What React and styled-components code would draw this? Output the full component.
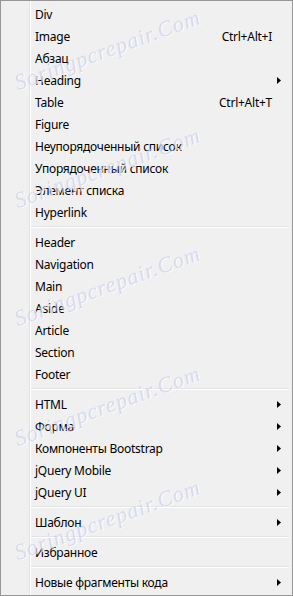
import React from 'react';
import styled, { createGlobalStyle } from 'styled-components';

const GlobalStyle = createGlobalStyle`
    html, body {
        margin: 0;
        padding: 0;
        background: #ffffff;
    }
`;

const sections = [
    [
        { label: 'Div' },
        { label: 'Image', shortcut: 'Ctrl+Alt+I' },
        { label: 'Абзац' },
        { label: 'Heading', sub: true },
        { label: 'Table', shortcut: 'Ctrl+Alt+T' },
        { label: 'Figure' },
        { label: 'Неупорядоченный список' },
        { label: 'Упорядоченный список' },
        { label: 'Элемент списка' },
        { label: 'Hyperlink' },
    ],
    [
        { label: 'Header' },
        { label: 'Navigation' },
        { label: 'Main' },
        { label: 'Aside' },
        { label: 'Article' },
        { label: 'Section' },
        { label: 'Footer' },
    ],
    [
        { label: 'HTML', sub: true },
        { label: 'Форма', sub: true },
        { label: 'Компоненты Bootstrap', sub: true },
        { label: 'jQuery Mobile', sub: true },
        { label: 'jQuery UI', sub: true },
    ],
    [{ label: 'Шаблон', sub: true }],
    [{ label: 'Избранное' }],
    [{ label: 'Новые фрагменты кода', sub: true }],
];

// watermark spots, top-left of each stamp
const stamps = [
    { left: 18, top: 71 },
    { left: 18, top: 189 },
    { left: 18, top: 307 },
    { left: 18, top: 427 },
    { left: 18, top: 541 },
];

function Arrow() {
    return (
        <svg width="4" height="7" viewBox="0 0 4 7">
            <path d="M0 0 L4 3.5 L0 7 Z" fill="#000" />
        </svg>
    );
}

function App() {
    return (
        <>
            <GlobalStyle />
            <Menu>
                {sections.map((items, i) => (
                    <React.Fragment key={i}>
                        {i > 0 && <Separator />}
                        {items.map((item) => (
                            <Row key={item.label}>
                                <Label>{item.label}</Label>
                                {item.shortcut && <Shortcut>{item.shortcut}</Shortcut>}
                                <Trail>{item.sub && <Arrow />}</Trail>
                            </Row>
                        ))}
                    </React.Fragment>
                ))}
                {stamps.map((s, i) => (
                    <Watermark key={i} style={{ left: s.left, top: s.top }}>
                        Soringpcrepair.Com
                    </Watermark>
                ))}
            </Menu>
        </>
    );
}

const Menu = styled.div`
    position: relative;
    box-sizing: border-box;
    width: 293px;
    height: 596px;
    padding: 2px;
    overflow: hidden;
    border: 1px solid #979797;
    background-color: #f0f0f0;
    background-image: linear-gradient(
        to right,
        transparent 28px,
        #e2e3e3 28px,
        #e2e3e3 29px,
        #ffffff 29px,
        #ffffff 30px,
        transparent 30px
    );
    font-family: "Noto Sans", "Open Sans", sans-serif;
    font-size: 12px;
    letter-spacing: -0.25px;
    color: #000;
`;

const Row = styled.div`
    display: flex;
    align-items: center;
    height: 22px;
    padding: 0 9px 0 32px;
    white-space: nowrap;
`;

const Label = styled.span`
    flex: 1;
`;

const Shortcut = styled.span`
    margin-right: 5px;
`;

const Trail = styled.span`
    display: flex;
    align-items: center;
    width: 4px;
    height: 7px;
`;

const Separator = styled.div`
    display: flex;
    align-items: center;
    height: 8px;
    margin: 0 1px 0 28px;

    &::before {
        content: '';
        flex: 1;
        border-top: 1px solid #e2e3e3;
        border-bottom: 1px solid #ffffff;
    }
`;

const Watermark = styled.div`
    position: absolute;
    pointer-events: none;
    transform: rotate(-20deg);
    transform-origin: left bottom;
    font-family: "Liberation Serif", serif;
    font-style: italic;
    font-size: 22px;
    line-height: 22px;
    letter-spacing: 1px;
    color: rgba(190, 196, 234, 0.55);
    text-shadow: 1px 1px 0 rgba(255, 255, 255, 0.75);
    white-space: nowrap;
`;

export default App;
